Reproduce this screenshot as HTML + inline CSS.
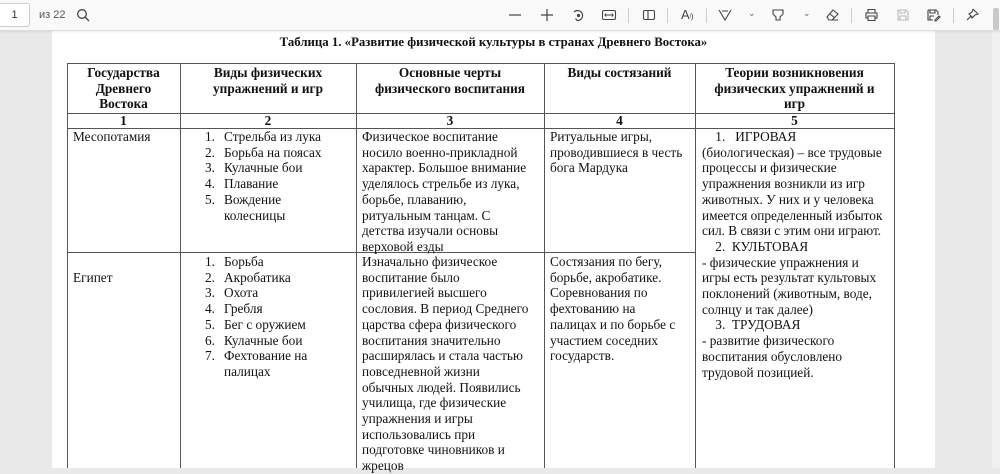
<!DOCTYPE html>
<html><head><meta charset="utf-8"><style>
*{margin:0;padding:0;box-sizing:border-box}
body{width:1000px;height:468px;overflow:hidden;background:#e9e9e9;font-family:"Liberation Serif",serif;position:relative;color:#111}
#tb{position:absolute;left:0;top:0;width:1000px;height:31px;background:#f9f9f9;border-bottom:1px solid #dcdcdc;box-shadow:0 1px 2px rgba(0,0,0,.08);font-family:"Liberation Sans",sans-serif;font-size:11px;color:#555;z-index:5}
#pg{position:absolute;left:52px;top:31px;width:883px;height:437px;background:#fff}
#sb{position:absolute;left:992px;top:31px;width:8px;height:437px;background:#f0f0f0}
.t{position:absolute;font-size:13.3px;line-height:15.7px;white-space:nowrap}
.b{font-weight:bold;text-align:center}
.v{position:absolute;width:1px;background:#555;top:63px;height:405px}
.h{position:absolute;height:1px;background:#555}
svg{position:absolute}
</style></head><body>
<div id="tb">
<div style="position:absolute;left:-4px;top:3px;width:34px;height:24px;border:1px solid #ccc;border-radius:3px;background:#fff;text-align:center;line-height:22px;color:#333">&nbsp;1</div>
<div style="position:absolute;left:39px;top:9px">из 22</div>
<svg style="left:76px;top:8px" width="14" height="14" viewBox="0 0 14 14" fill="none" stroke="#444" stroke-width="1.3"><circle cx="6" cy="6" r="4.3"/><path d="M9.2 9.2L13 13"/></svg>
<svg style="left:508px;top:8px" width="14" height="14" fill="none" stroke="#444" stroke-width="1.2"><path d="M1 7H13"/></svg>
<svg style="left:540px;top:8px" width="14" height="14" fill="none" stroke="#444" stroke-width="1.2"><path d="M1 7H13M7 1V13"/></svg>
<svg style="left:571px;top:8px" width="14" height="14" fill="none" stroke="#444" stroke-width="1.2"><path d="M3 4A5 5 0 1 1 6 12.5"/><path d="M6 12.5L4.5 10.5"/><circle cx="7.5" cy="7.5" r="1" fill="#444"/></svg>
<svg style="left:601px;top:8px" width="16" height="14" fill="none" stroke="#444" stroke-width="1.1"><rect x="1.5" y="2.5" width="13" height="9" rx="1.5"/><path d="M4 7H12M5 5.5L4 7L5 8.5M11 5.5L12 7L11 8.5"/></svg>
<div style="position:absolute;left:628px;top:8px;width:1px;height:15px;background:#ccc"></div>
<svg style="left:642px;top:8px" width="14" height="14" fill="none" stroke="#444" stroke-width="1.1"><rect x="1.5" y="2.5" width="11" height="9" rx="1.5"/><path d="M6 2.5V11.5"/></svg>
<div style="position:absolute;left:667px;top:8px;width:1px;height:15px;background:#ccc"></div>
<div style="position:absolute;left:681px;top:7px;font-size:13px;color:#444">A<span style="font-size:8px">ᵎ)</span></div>
<div style="position:absolute;left:706px;top:8px;width:1px;height:15px;background:#ccc"></div>
<svg style="left:718px;top:8px" width="14" height="14" fill="none" stroke="#444" stroke-width="1.1"><path d="M1 2L7 12L13 2M4 3H10"/></svg>
<div style="position:absolute;left:748px;top:8px;color:#666;font-size:9px">⌄</div>
<svg style="left:771px;top:8px" width="14" height="14" fill="none" stroke="#444" stroke-width="1.1"><path d="M2 2H12V6L9 9V12H5V9L2 6Z"/></svg>
<div style="position:absolute;left:803px;top:8px;color:#666;font-size:9px">⌄</div>
<svg style="left:825px;top:8px" width="15" height="14" fill="none" stroke="#444" stroke-width="1.1"><path d="M2 9L8 2L13 6L7 12H4Z M5 6L10 10M7 12H13"/></svg>
<div style="position:absolute;left:851px;top:8px;width:1px;height:15px;background:#ccc"></div>
<svg style="left:864px;top:8px" width="15" height="14" fill="none" stroke="#444" stroke-width="1.1"><path d="M4 5V1.5H11V5M4 10H2V5H13V10H11M4 8H11V12.5H4Z"/></svg>
<svg style="left:896px;top:8px" width="14" height="14" fill="none" stroke="#bbb" stroke-width="1.1"><path d="M2 2H10L12 4V12H2Z M4 2V5H9V2M4 12V8H10V12"/></svg>
<svg style="left:926px;top:8px" width="15" height="14" fill="none" stroke="#444" stroke-width="1.1"><path d="M2 2H10L12 4V7M7 12H2V2M4 2V5H9V2M4 12V8H8M9 12L13 8L14 9L10 13H9Z"/></svg>
<div style="position:absolute;left:953px;top:8px;width:1px;height:15px;background:#ccc"></div>
<svg style="left:965px;top:8px" width="14" height="14" fill="none" stroke="#444" stroke-width="1.1"><path d="M8 1L13 6L10 7L7 10L6 8L2 12M8 1L7 4L4 6L8 10"/></svg>
<div style="position:absolute;left:993px;top:8px;width:6px;height:22px;background:#c8c8c8;border-radius:2px"></div>
</div>
<div id="pg"></div>
<div id="sb"></div>
<div class="t b" style="left:52px;width:883px;top:35px;font-size:12.8px">Таблица 1. «Развитие физической культуры в странах Древнего Востока»</div>

<div class="h" style="left:67px;width:828px;top:63px"></div>
<div class="h" style="left:67px;width:828px;top:113px"></div>
<div class="h" style="left:67px;width:828px;top:128px"></div>
<div class="h" style="left:67px;width:628px;top:252px"></div>
<div class="v" style="left:67px"></div>
<div class="v" style="left:180px"></div>
<div class="v" style="left:356px"></div>
<div class="v" style="left:544px"></div>
<div class="v" style="left:695px"></div>
<div class="v" style="left:894px"></div>

<div class="t b" style="left:67px;width:113px;top:65px">Государства<br>Древнего<br>Востока</div>
<div class="t b" style="left:180px;width:176px;top:65px">Виды физических<br>упражнений и игр</div>
<div class="t b" style="left:356px;width:188px;top:65px">Основные черты<br>физического воспитания</div>
<div class="t b" style="left:544px;width:151px;top:65px">Виды состязаний</div>
<div class="t b" style="left:695px;width:199px;top:65px">Теории возникновения<br>физических упражнений и<br>игр</div>
<div class="t b" style="left:67px;width:113px;top:113px">1</div>
<div class="t b" style="left:180px;width:176px;top:113px">2</div>
<div class="t b" style="left:356px;width:188px;top:113px">3</div>
<div class="t b" style="left:544px;width:151px;top:113px">4</div>
<div class="t b" style="left:695px;width:199px;top:113px">5</div>

<div class="t" style="left:73px;top:129px">Месопотамия</div>
<div class="t" style="left:205px;top:129px">1.<br>2.<br>3.<br>4.<br>5.</div>
<div class="t" style="left:224px;top:129px">Стрельба из лука<br>Борьба на поясах<br>Кулачные бои<br>Плавание<br>Вождение<br>колесницы</div>
<div class="t" style="left:362px;top:129px">Физическое воспитание<br>носило военно-прикладной<br>характер. Большое внимание<br>уделялось стрельбе из лука,<br>борьбе, плаванию,<br>ритуальным танцам. С<br>детства изучали основы<br>верховой езды</div>
<div class="t" style="left:550px;top:129px">Ритуальные игры,<br>проводившиеся в честь<br>бога Мардука</div>
<div class="t" style="left:702px;top:129px">&nbsp;&nbsp;&nbsp;&nbsp;1.&nbsp;&nbsp;&nbsp;ИГРОВАЯ<br>(биологическая) – все трудовые<br>процессы и физические<br>упражнения возникли из игр<br>животных. У них и у человека<br>имеется определенный избыток<br>сил. В связи с этим они играют.<br>&nbsp;&nbsp;&nbsp;&nbsp;2.&nbsp;&nbsp;КУЛЬТОВАЯ<br>- физические упражнения и<br>игры есть результат культовых<br>поклонений (животным, воде,<br>солнцу и так далее)<br>&nbsp;&nbsp;&nbsp;&nbsp;3.&nbsp;&nbsp;ТРУДОВАЯ<br>- развитие физического<br>воспитания обусловлено<br>трудовой позицией.</div>

<div class="t" style="left:73px;top:270px">Египет</div>
<div class="t" style="left:205px;top:254px">1.<br>2.<br>3.<br>4.<br>5.<br>6.<br>7.</div>
<div class="t" style="left:224px;top:254px">Борьба<br>Акробатика<br>Охота<br>Гребля<br>Бег с оружием<br>Кулачные бои<br>Фехтование на<br>палицах</div>
<div class="t" style="left:362px;top:254px">Изначально физическое<br>воспитание было<br>привилегией высшего<br>сословия. В период Среднего<br>царства сфера физического<br>воспитания значительно<br>расширялась и стала частью<br>повседневной жизни<br>обычных людей. Появились<br>училища, где физические<br>упражнения и игры<br>использовались при<br>подготовке чиновников и<br>жрецов</div>
<div class="t" style="left:550px;top:254px">Состязания по бегу,<br>борьбе, акробатике.<br>Соревнования по<br>фехтованию на<br>палицах и по борьбе с<br>участием соседних<br>государств.</div>
</body></html>
